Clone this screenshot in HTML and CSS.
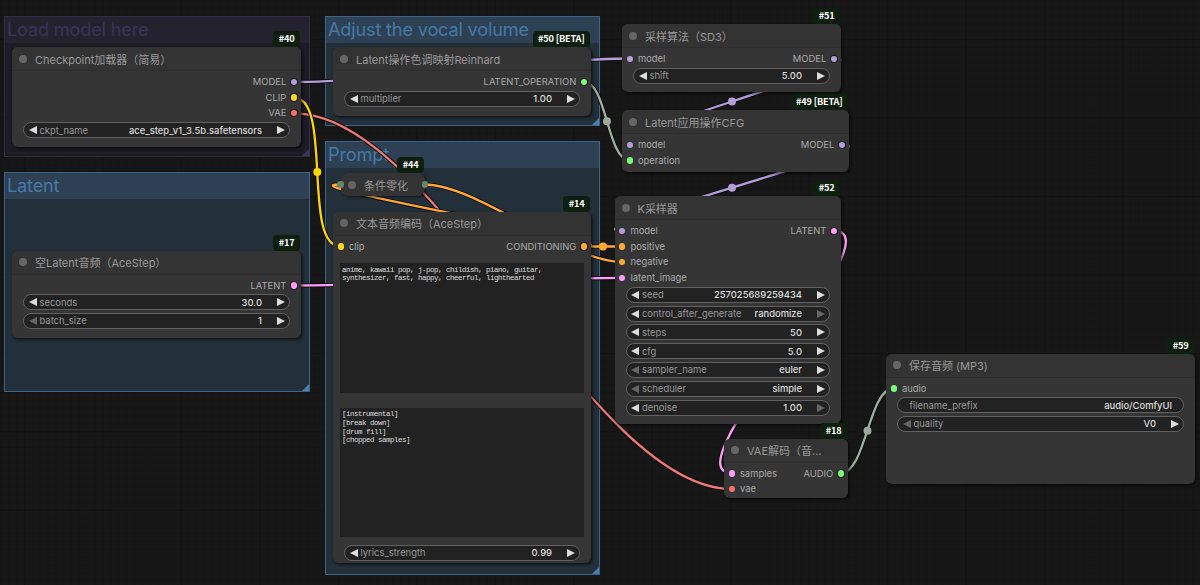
FILE: index.html
```html
<!DOCTYPE html>
<html lang="zh-CN">
<head>
  <meta charset="UTF-8">
  <meta name="viewport" content="width=device-width, initial-scale=1.0">
  <title>ComfyUI</title>
  <link rel="stylesheet" href="styles.css">
</head>
<body>
  <main class="canvas">
    <!-- groups -->
    <section class="group purple" id="group-model"><h2>Load model here</h2></section>
    <section class="group" id="group-latent"><h2>Latent</h2></section>
    <section class="group" id="group-volume"><h2>Adjust the vocal volume</h2></section>
    <section class="group" id="group-prompt"><h2>Prompt</h2></section>

    <!-- links -->
    <svg class="links" width="1200" height="585" viewBox="0 0 1200 585">
      <defs>
        <path id="l-vae" d="M294 113.3C438 113.3 588 489 732 489"/>
        <path id="l-model1" d="M294 82C378 82 546 58.5 630 58.5"/>
        <path id="l-clip" d="M294 97.7C333 97.7 301.5 246.5 340.5 246.5"/>
        <path id="l-model2" d="M834 58.4C889 58.4 575 144.6 630 144.6"/>
        <path id="l-model3" d="M842 144.6C901 144.6 563 230.8 622 230.8"/>
        <path id="l-op" d="M584 82C607 82 607 160.5 630 160.5"/>
        <path id="l-zero" d="M584 246.5C647 246.5 277 184.5 340 184.5"/>
        <path id="l-neg" d="M424.5 184.5C477.5 184.5 569 262 622 262"/>
        <path id="l-pos" d="M584 246.5H622"/>
        <path id="l-latent" d="M294 285.5C376 285.5 540 277.8 622 277.8"/>
        <path id="l-samples" d="M834 230.8C900 230.8 666 473 732 473"/>
        <path id="l-audio" d="M841 473C866 473 868.5 388.5 893.5 388.5"/>
      </defs>
      <g class="outline">
        <use href="#l-model1"/><use href="#l-model2"/><use href="#l-model3"/>
        <use href="#l-op"/><use href="#l-pos"/><use href="#l-latent"/>
        <use href="#l-samples"/><use href="#l-audio"/>
      </g>
      <g class="outline"><use href="#l-vae"/></g>
      <g class="link red"><use href="#l-vae"/></g>
      <g class="outline"><use href="#l-zero"/><use href="#l-neg"/><use href="#l-clip"/></g>
      <g class="link violet">
        <use href="#l-model1"/><use href="#l-model2"/><use href="#l-model3"/>
      </g>
      <g class="link yellow"><use href="#l-clip"/></g>
      <g class="link orange"><use href="#l-zero"/><use href="#l-neg"/><use href="#l-pos"/></g>
      <g class="link pink"><use href="#l-latent"/><use href="#l-samples"/></g>
      <g class="link gray"><use href="#l-op"/><use href="#l-audio"/></g>
      <g>
        <circle class="mid-violet" cx="732" cy="101.5" r="4"/>
        <circle class="mid-violet" cx="732" cy="187.7" r="4"/>
        <circle class="mid-yellow" cx="317.3" cy="172" r="4"/>
        <circle class="mid-orange" cx="603" cy="246.5" r="4"/>
        <circle class="mid-gray" cx="607" cy="121.2" r="4"/>
        <circle class="mid-gray" cx="867.5" cy="430.7" r="4"/>
      </g>
    </svg>

    <!-- nodes -->
    <article class="node" id="node-40">
      <span class="badge">#40</span>
      <header>Checkpoint加载器（简易）</header>
      <div class="slots">
        <div class="row"><span class="out violet">MODEL</span></div>
        <div class="row"><span class="out yellow">CLIP</span></div>
        <div class="row"><span class="out red">VAE</span></div>
      </div>
      <div class="widgets">
        <div class="widget"><i class="prev"></i><label>ckpt_name</label><b>ace_step_v1_3.5b.safetensors</b><i class="next"></i></div>
      </div>
    </article>

    <article class="node" id="node-17">
      <span class="badge">#17</span>
      <header>空Latent音频（AceStep）</header>
      <div class="slots">
        <div class="row"><span class="out pink">LATENT</span></div>
      </div>
      <div class="widgets">
        <div class="widget"><i class="prev"></i><label>seconds</label><b>30.0</b><i class="next"></i></div>
        <div class="widget"><i class="prev off"></i><label>batch_size</label><b>1</b><i class="next"></i></div>
      </div>
    </article>

    <article class="node" id="node-50">
      <span class="badge">#50 [BETA]</span>
      <header>Latent操作色调映射Reinhard</header>
      <div class="slots">
        <div class="row"><span class="out green">LATENT_OPERATION</span></div>
      </div>
      <div class="widgets">
        <div class="widget"><i class="prev"></i><label>multiplier</label><b>1.00</b><i class="next"></i></div>
      </div>
    </article>

    <article class="node collapsed" id="node-44">
      <span class="badge">#44</span>
      <header>条件零化</header>
    </article>

    <article class="node" id="node-14">
      <span class="badge">#14</span>
      <header>文本音频编码（AceStep）</header>
      <div class="slots">
        <div class="row"><span class="in yellow">clip</span><span class="out orange">CONDITIONING</span></div>
      </div>
      <div class="texts">
        <pre>anime, kawaii pop, j-pop, childish, piano, guitar,
synthesizer, fast, happy, cheerful, lighthearted</pre>
        <pre>[instrumental]
[break down]
[drum fill]
[chopped samples]</pre>
      </div>
      <div class="widgets">
        <div class="widget"><i class="prev"></i><label>lyrics_strength</label><b>0.99</b><i class="next"></i></div>
      </div>
    </article>

    <article class="node" id="node-51">
      <span class="badge">#51</span>
      <header>采样算法（SD3）</header>
      <div class="slots">
        <div class="row"><span class="in violet">model</span><span class="out violet">MODEL</span></div>
      </div>
      <div class="widgets">
        <div class="widget"><i class="prev"></i><label>shift</label><b>5.00</b><i class="next"></i></div>
      </div>
    </article>

    <article class="node" id="node-49">
      <span class="badge">#49 [BETA]</span>
      <header>Latent应用操作CFG</header>
      <div class="slots">
        <div class="row"><span class="in violet">model</span><span class="out violet">MODEL</span></div>
        <div class="row"><span class="in green">operation</span></div>
      </div>
    </article>

    <article class="node" id="node-52">
      <span class="badge">#52</span>
      <header>K采样器</header>
      <div class="slots">
        <div class="row"><span class="in violet">model</span><span class="out pink">LATENT</span></div>
        <div class="row"><span class="in orange">positive</span></div>
        <div class="row"><span class="in orange">negative</span></div>
        <div class="row"><span class="in pink">latent_image</span></div>
      </div>
      <div class="widgets">
        <div class="widget"><i class="prev"></i><label>seed</label><b>257025689259434</b><i class="next"></i></div>
        <div class="widget"><i class="prev"></i><label>control_after_generate</label><b>randomize</b><i class="next off"></i></div>
        <div class="widget"><i class="prev"></i><label>steps</label><b>50</b><i class="next"></i></div>
        <div class="widget"><i class="prev"></i><label>cfg</label><b>5.0</b><i class="next"></i></div>
        <div class="widget"><i class="prev off"></i><label>sampler_name</label><b>euler</b><i class="next"></i></div>
        <div class="widget"><i class="prev off"></i><label>scheduler</label><b>simple</b><i class="next"></i></div>
        <div class="widget"><i class="prev"></i><label>denoise</label><b>1.00</b><i class="next off"></i></div>
      </div>
    </article>

    <article class="node" id="node-18">
      <span class="badge">#18</span>
      <header>VAE解码（音...</header>
      <div class="slots">
        <div class="row"><span class="in pink">samples</span><span class="out green">AUDIO</span></div>
        <div class="row"><span class="in red">vae</span></div>
      </div>
    </article>

    <article class="node" id="node-59">
      <span class="badge">#59</span>
      <header>保存音频 (MP3)</header>
      <div class="slots">
        <div class="row"><span class="in green">audio</span></div>
      </div>
      <div class="widgets">
        <div class="widget text"><label>filename_prefix</label><b>audio/ComfyUI</b></div>
        <div class="widget"><i class="prev off"></i><label>quality</label><b>V0</b><i class="next"></i></div>
      </div>
    </article>
  </main>
</body>
</html>
```
FILE: styles.css
```css
* {
  box-sizing: border-box;
}
body {
  margin: 0;
  background: #161616;
  color: #999;
  font-family: Inter, "Noto Sans CJK SC", sans-serif;
  font-size: 9.42px;
}
.canvas {
  position: relative;
  width: 1200px;
  height: 585px;
  overflow: hidden;
  background-color: #171717;
  background-image:
    linear-gradient(90deg, #131313 1px, transparent 1px),
    linear-gradient(#131313 1px, transparent 1px),
    linear-gradient(90deg, #151515 1px, transparent 1px),
    linear-gradient(#151515 1px, transparent 1px);
  background-size: 78.5px 78.5px, 78.5px 78.5px, 7.85px 7.85px, 7.85px 7.85px;
  background-position: 24px 39px;
}

/* groups */
.group {
  position: absolute;
  background: #232f39;
  border: 1px solid #3a6489;
}
.group h2 {
  margin: 0;
  height: 26px;
  padding-left: 2px;
  background: #2e4154;
  color: #4778a5;
  font-size: 18.2px;
  font-weight: 400;
  letter-spacing: -0.2px;
  line-height: 24px;
  white-space: nowrap;
}
.group::after {
  content: "";
  position: absolute;
  right: 0;
  bottom: 0;
  border-left: 7px solid transparent;
  border-bottom: 7px solid #4a7fb0;
}
.group.purple {
  background: #1d1b25;
  border-color: #312d49;
}
.group.purple h2 {
  background: #25222f;
  color: #3a3355;
}
.group.purple::after {
  border-bottom-color: #3b3560;
}
#group-model { left: 4px; top: 16px; width: 306px; height: 141px; }
#group-latent { left: 4px; top: 172px; width: 306px; height: 220px; }
#group-volume { left: 325px; top: 16px; width: 275px; height: 110px; }
#group-prompt { left: 325px; top: 141px; width: 275px; height: 434px; }

/* links */
.links {
  position: absolute;
  left: 0;
  top: 0;
  fill: none;
}
.outline {
  stroke: #0c0c0c;
  stroke-width: 4.2;
}
.link { stroke-width: 2.3; }
.link.violet { stroke: #b39ddb; }
.link.yellow { stroke: #ffd500; }
.link.red { stroke: #f27878; }
.link.orange { stroke: #ffa931; }
.link.pink { stroke: #ff9cf9; }
.link.gray { stroke: #a0b0a0; }
.mid-violet { fill: #b39ddb; }
.mid-yellow { fill: #ffd500; }
.mid-orange { fill: #ffa931; }
.mid-gray { fill: #9aaa9a; }

/* nodes */
.node {
  position: absolute;
  background: #353535;
  border-radius: 6px;
  box-shadow: 1.5px 1.5px 2.5px rgba(0, 0, 0, 0.5);
}
.node header {
  display: flex;
  align-items: center;
  height: 24px;
  padding-left: 7.2px;
  background: #333;
  border-bottom: 1px solid #2e2e2e;
  border-radius: 6px 6px 0 0;
  font-size: 11px;
  white-space: nowrap;
}
.node header::before {
  content: "";
  width: 8px;
  height: 8px;
  margin-right: 7.8px;
  border-radius: 50%;
  background: #666;
}
.badge {
  position: absolute;
  right: 1px;
  bottom: 100%;
  height: 16px;
  padding: 0 5.5px;
  background: #0f1f0f;
  border-radius: 4px;
  color: #fff;
  font-family: "Noto Sans CJK SC", sans-serif;
  font-size: 9.2px;
  font-weight: 700;
  letter-spacing: -0.2px;
  line-height: 15px;
  white-space: nowrap;
}

.slots {
  padding: 3px 3.8px 0 4.5px;
}
.row {
  display: flex;
  height: 15.7px;
  line-height: 15.7px;
}
.in,
.out {
  display: flex;
  align-items: center;
  color: #aaa;
}
.out {
  flex-direction: row-reverse;
  margin-left: auto;
}
.in::before,
.out::before {
  content: "";
  width: 6.4px;
  height: 6.4px;
  border-radius: 50%;
  background: currentColor;
}
.in::before { margin-right: 5px; }
.out::before {
  margin-left: 4.5px;
  box-shadow: 0 0 0 1px #1a1a1a;
}
.violet::before { background: #b39ddb; }
.yellow::before { background: #ffd91a; }
.red::before { background: #ff6e6e; }
.green::before { background: #7f7; }
.pink::before { background: #ff9cf9; }
.orange::before { background: #ffa931; }

.widgets {
  display: flex;
  flex-direction: column;
  gap: 2.8px;
  padding: 1px 11px 0;
}
.widget {
  display: flex;
  align-items: center;
  height: 16px;
  padding: 0 4.5px;
  background: #222;
  border: 1px solid #606060;
  border-radius: 8px;
  white-space: nowrap;
}
.widget label { color: #999; }
.widget b {
  margin-left: auto;
  color: #ddd;
  font-weight: 500;
}
.widget.text { padding: 0 11px 0 11.5px; }
.prev,
.next {
  border-top: 4px solid transparent;
  border-bottom: 4px solid transparent;
}
.prev {
  margin-right: 3px;
  border-right: 8px solid #ddd;
}
.next {
  margin-left: 14.5px;
  border-left: 8px solid #ddd;
}
.prev.off { border-right-color: #666; }
.next.off { border-left-color: #666; }

.texts {
  display: flex;
  flex-direction: column;
  gap: 15px;
  padding: 9px 7px 6.5px;
}
.texts pre {
  margin: 0;
  height: 129.5px;
  padding: 2.5px 2px;
  background: #222;
  color: #ddd;
  font-family: "Liberation Mono", monospace;
  font-size: 7.5px;
  letter-spacing: -0.5px;
  line-height: 8.7px;
}

.collapsed,
.collapsed header {
  height: 23px;
  border: none;
  border-radius: 8px;
}
.collapsed::before,
.collapsed::after {
  content: "";
  position: absolute;
  top: 8px;
  width: 6.5px;
  height: 6.5px;
  border-radius: 50%;
  background: #686;
}
.collapsed::before { left: -4px; }
.collapsed::after { right: -3px; }

#node-40 { left: 12px; top: 47px; width: 289px; height: 100px; }
#node-17 { left: 12px; top: 250.5px; width: 289px; height: 87.5px; }
#node-50 { left: 333px; top: 47px; width: 258px; height: 69px; }
#node-44 { left: 341px; top: 173px; width: 84px; }
#node-14 { left: 333px; top: 211.5px; width: 258px; height: 351.5px; }
#node-51 { left: 622px; top: 24px; width: 219px; height: 68px; }
#node-49 { left: 622px; top: 110px; width: 227px; height: 62px; }
#node-52 { left: 614.5px; top: 196px; width: 226.5px; height: 228px; }
#node-18 { left: 724px; top: 438.5px; width: 124px; height: 59.5px; }
#node-59 { left: 886px; top: 353.5px; width: 309px; height: 130px; }
```
